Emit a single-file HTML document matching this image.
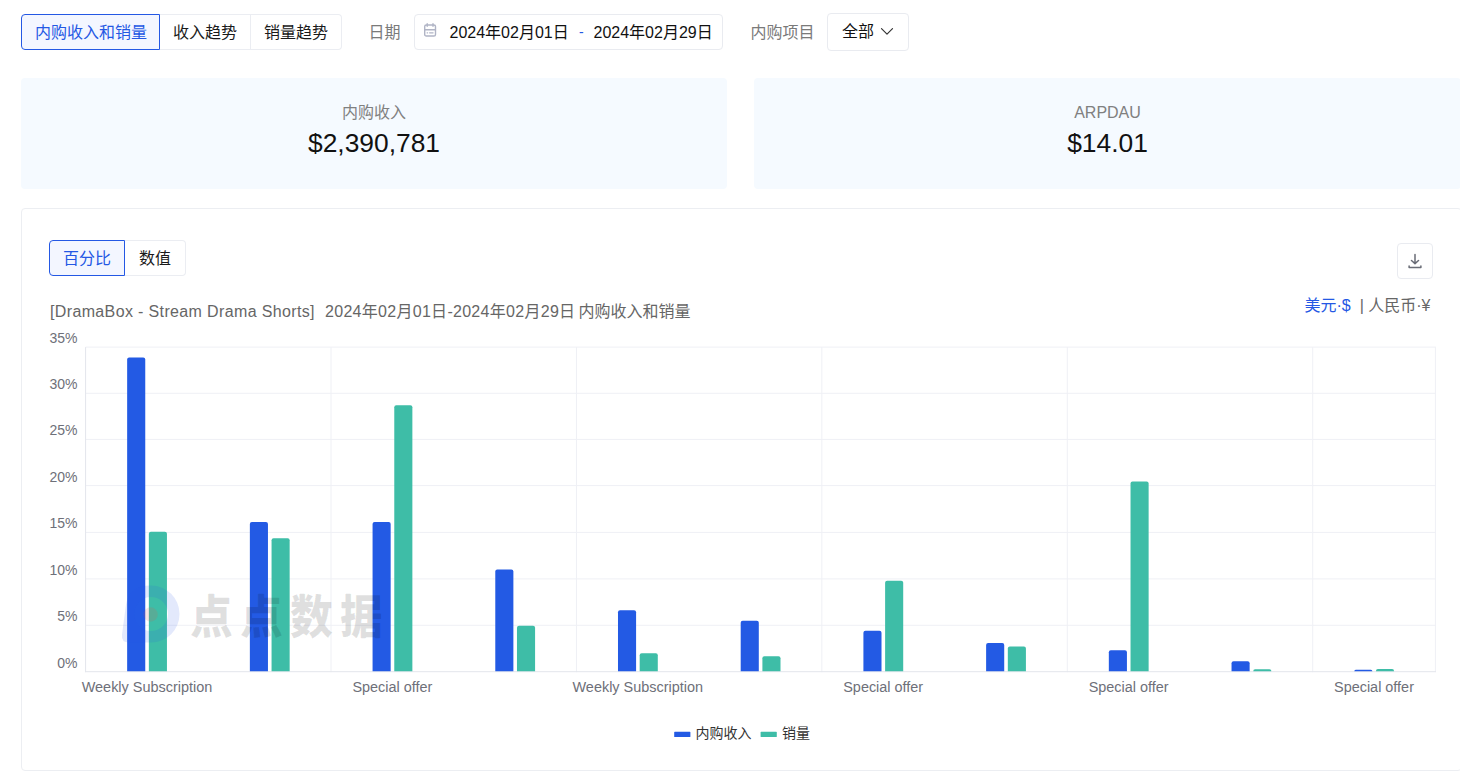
<!DOCTYPE html>
<html lang="zh-CN">
<head>
<meta charset="utf-8">
<title>内购收入和销量</title>
<style>
*{box-sizing:border-box;margin:0;padding:0}
html,body{width:1460px;height:776px;overflow:hidden;background:#fff}
body{position:relative;font-family:"Liberation Sans","Noto Sans CJK SC",sans-serif;font-size:16px;color:#111;line-height:1}
.abs{position:absolute;white-space:nowrap}
.tabs{position:absolute;display:flex;height:36px}
.tab{height:36px;line-height:35px;border:1px solid #ebedf2;border-left:none;padding:0 13px;font-size:16px;color:#1a1a1a;background:#fff;white-space:nowrap;text-align:center}
.tab:last-child{border-radius:0 4px 4px 0}
.tab.on{border:1px solid #2458e4;border-radius:4px 0 0 4px;background:#f3f6ff;color:#2458e4}
.lbl{position:absolute;font-size:16px;color:#7a7a7a;height:36px;line-height:36px;white-space:nowrap}
.box{position:absolute;border:1px solid #e9ebf0;border-radius:4px;background:#fff}
.stat{position:absolute;top:78px;height:111px;background:#f5faff;border-radius:4px;text-align:center}
.stat .k{position:absolute;left:0;right:0;top:25px;font-size:16px;line-height:20px;color:#808080}
.stat .v{position:absolute;left:0;right:0;top:48.7px;font-size:26.4px;line-height:32px;color:#111}
.card{position:absolute;left:21px;top:208px;width:1441px;height:563px;border:1px solid #eceef2;border-radius:4px;background:#fff}
</style>
</head>
<body>

<!-- top filter row -->
<div class="tabs" style="left:21px;top:14px">
  <div class="tab on" style="width:139px">内购收入和销量</div>
  <div class="tab" style="width:91px">收入趋势</div>
  <div class="tab" style="width:91px">销量趋势</div>
</div>

<div class="lbl" style="left:368.5px;top:15px">日期</div>
<div class="box" style="left:414px;top:14px;width:309px;height:36px">
  <svg class="abs" style="left:8.9px;top:8px" width="13" height="15" viewBox="0 0 13 15" fill="none" stroke="#b0b4c5" stroke-width="1.4" stroke-linecap="round">
    <rect x="0.7" y="2" width="10.8" height="11" rx="1.6"/>
    <path d="M3.2 0.7v2.6M9 0.7v2.6M0.9 6.8h10.4"/>
    <path d="M3.1 9.8h0.5M5.6 9.8h3.5" stroke-width="1.2"/>
  </svg>
  <div class="abs" style="left:34.5px;top:0.5px;height:34px;line-height:34px;font-size:16px;color:#111">2024年02月01日</div>
  <div class="abs" style="left:164px;top:0.5px;height:34px;line-height:33px;font-size:14px;color:#2458e4">-</div>
  <div class="abs" style="left:178.5px;top:0.5px;height:34px;line-height:34px;font-size:16px;color:#111">2024年02月29日</div>
</div>

<div class="lbl" style="left:750.5px;top:15px">内购项目</div>
<div class="box" style="left:827px;top:13px;width:82px;height:38px">
  <div class="abs" style="left:14px;top:0;height:36px;line-height:36px;font-size:16px;color:#111">全部</div>
  <svg class="abs" style="left:52px;top:13px" width="14" height="9" viewBox="0 0 14 9" fill="none" stroke="#333" stroke-width="1.2" stroke-linecap="round" stroke-linejoin="round"><path d="M1.5 1.7 L7 7.2 L12.5 1.7"/></svg>
</div>

<!-- stat cards -->
<div class="stat" style="left:21px;width:706px"><div class="k">内购收入</div><div class="v">$2,390,781</div></div>
<div class="stat" style="left:754px;width:707px"><div class="k">ARPDAU</div><div class="v">$14.01</div></div>

<!-- chart card -->
<div class="card"></div>

<div class="tabs" style="left:49px;top:240px">
  <div class="tab on" style="width:76px;line-height:36px">百分比</div>
  <div class="tab" style="width:61px;line-height:36px">数值</div>
</div>

<div class="box" style="left:1397px;top:243px;width:36px;height:36px">
  <svg class="abs" style="left:9px;top:9px" width="16" height="16" viewBox="0 0 16 16" fill="none" stroke="#696c76" stroke-width="1.5" stroke-linecap="round" stroke-linejoin="round">
    <path d="M8 1.4v8.8M4.5 7.5 8 10.6l3.5-3.1M2.1 13v1.4h11.8v-1.4"/>
  </svg>
</div>

<div class="abs" id="t1" style="left:50px;top:301px;height:22px;line-height:22px;font-size:16px;color:#666"><span id="t1a" style="letter-spacing:0.36px">[DramaBox - Stream Drama Shorts]</span></div>
<div class="abs" id="t2" style="left:325px;top:301px;height:22px;line-height:22px;font-size:16px;color:#666;letter-spacing:0.29px">2024年02月01日-2024年02月29日</div>
<div class="abs" id="t3" style="left:578.5px;top:301px;height:22px;line-height:22px;font-size:16px;color:#666">内购收入和销量</div>

<div class="abs" id="cur" style="right:29.5px;top:295px;height:22px;line-height:22px;font-size:16px;color:#666"><span style="color:#2458e4">美元·$</span>&nbsp; | 人民币·¥</div>

<svg id="chart" class="abs" style="left:0;top:0" width="1460" height="776" viewBox="0 0 1460 776" font-family="'Liberation Sans','Noto Sans CJK SC',sans-serif">
<line x1="85.6" y1="347.1" x2="1435.9" y2="347.1" stroke="#eff0f5" stroke-width="1"/>
<line x1="85.6" y1="393.3" x2="1435.9" y2="393.3" stroke="#eff0f5" stroke-width="1"/>
<line x1="85.6" y1="439.4" x2="1435.9" y2="439.4" stroke="#eff0f5" stroke-width="1"/>
<line x1="85.6" y1="485.6" x2="1435.9" y2="485.6" stroke="#eff0f5" stroke-width="1"/>
<line x1="85.6" y1="532.4" x2="1435.9" y2="532.4" stroke="#eff0f5" stroke-width="1"/>
<line x1="85.6" y1="578.9" x2="1435.9" y2="578.9" stroke="#eff0f5" stroke-width="1"/>
<line x1="85.6" y1="625.3" x2="1435.9" y2="625.3" stroke="#eff0f5" stroke-width="1"/>
<line x1="85.6" y1="347.1" x2="85.6" y2="672.2" stroke="#e3e5ec" stroke-width="1"/>
<line x1="331.02" y1="347.1" x2="331.02" y2="672.2" stroke="#eff0f5" stroke-width="1"/>
<line x1="576.44" y1="347.1" x2="576.44" y2="672.2" stroke="#eff0f5" stroke-width="1"/>
<line x1="821.85" y1="347.1" x2="821.85" y2="672.2" stroke="#eff0f5" stroke-width="1"/>
<line x1="1067.27" y1="347.1" x2="1067.27" y2="672.2" stroke="#eff0f5" stroke-width="1"/>
<line x1="1312.69" y1="347.1" x2="1312.69" y2="672.2" stroke="#eff0f5" stroke-width="1"/>
<line x1="1435.4" y1="347.1" x2="1435.4" y2="672.2" stroke="#eff0f5" stroke-width="1"/>
<line x1="85.1" y1="671.7" x2="1435.9" y2="671.7" stroke="#e3e5ec" stroke-width="1"/>
<text x="77.5" y="343.1" text-anchor="end" font-size="14" fill="#6e7079">35%</text>
<text x="77.5" y="389.3" text-anchor="end" font-size="14" fill="#6e7079">30%</text>
<text x="77.5" y="435.4" text-anchor="end" font-size="14" fill="#6e7079">25%</text>
<text x="77.5" y="481.6" text-anchor="end" font-size="14" fill="#6e7079">20%</text>
<text x="77.5" y="528.4" text-anchor="end" font-size="14" fill="#6e7079">15%</text>
<text x="77.5" y="574.9" text-anchor="end" font-size="14" fill="#6e7079">10%</text>
<text x="77.5" y="621.3" text-anchor="end" font-size="14" fill="#6e7079">5%</text>
<text x="77.5" y="667.7" text-anchor="end" font-size="14" fill="#6e7079">0%</text>
<path d="M127.15 671.2 V359.50 Q127.15 357.50 129.15 357.50 H143.25 Q145.25 357.50 145.25 359.50 V671.2 Z" fill="#235ae4"/>
<path d="M148.85 671.2 V533.75 Q148.85 531.75 150.85 531.75 H164.95 Q166.95 531.75 166.95 533.75 V671.2 Z" fill="#3ebda7"/>
<path d="M249.86 671.2 V524.00 Q249.86 522.00 251.86 522.00 H265.96 Q267.96 522.00 267.96 524.00 V671.2 Z" fill="#235ae4"/>
<path d="M271.56 671.2 V540.25 Q271.56 538.25 273.56 538.25 H287.66 Q289.66 538.25 289.66 540.25 V671.2 Z" fill="#3ebda7"/>
<path d="M372.57 671.2 V524.00 Q372.57 522.00 374.57 522.00 H388.67 Q390.67 522.00 390.67 524.00 V671.2 Z" fill="#235ae4"/>
<path d="M394.27 671.2 V407.25 Q394.27 405.25 396.27 405.25 H410.37 Q412.37 405.25 412.37 407.25 V671.2 Z" fill="#3ebda7"/>
<path d="M495.28 671.2 V571.50 Q495.28 569.50 497.28 569.50 H511.38 Q513.38 569.50 513.38 571.50 V671.2 Z" fill="#235ae4"/>
<path d="M516.98 671.2 V627.75 Q516.98 625.75 518.98 625.75 H533.08 Q535.08 625.75 535.08 627.75 V671.2 Z" fill="#3ebda7"/>
<path d="M617.99 671.2 V612.25 Q617.99 610.25 619.99 610.25 H634.09 Q636.09 610.25 636.09 612.25 V671.2 Z" fill="#235ae4"/>
<path d="M639.69 671.2 V655.25 Q639.69 653.25 641.69 653.25 H655.79 Q657.79 653.25 657.79 655.25 V671.2 Z" fill="#3ebda7"/>
<path d="M740.70 671.2 V622.75 Q740.70 620.75 742.70 620.75 H756.80 Q758.80 620.75 758.80 622.75 V671.2 Z" fill="#235ae4"/>
<path d="M762.40 671.2 V658.25 Q762.40 656.25 764.40 656.25 H778.50 Q780.50 656.25 780.50 658.25 V671.2 Z" fill="#3ebda7"/>
<path d="M863.41 671.2 V632.70 Q863.41 630.70 865.41 630.70 H879.51 Q881.51 630.70 881.51 632.70 V671.2 Z" fill="#235ae4"/>
<path d="M885.11 671.2 V582.70 Q885.11 580.70 887.11 580.70 H901.21 Q903.21 580.70 903.21 582.70 V671.2 Z" fill="#3ebda7"/>
<path d="M986.12 671.2 V645.10 Q986.12 643.10 988.12 643.10 H1002.22 Q1004.22 643.10 1004.22 645.10 V671.2 Z" fill="#235ae4"/>
<path d="M1007.82 671.2 V648.40 Q1007.82 646.40 1009.82 646.40 H1023.92 Q1025.92 646.40 1025.92 648.40 V671.2 Z" fill="#3ebda7"/>
<path d="M1108.83 671.2 V652.30 Q1108.83 650.30 1110.83 650.30 H1124.93 Q1126.93 650.30 1126.93 652.30 V671.2 Z" fill="#235ae4"/>
<path d="M1130.53 671.2 V483.40 Q1130.53 481.40 1132.53 481.40 H1146.63 Q1148.63 481.40 1148.63 483.40 V671.2 Z" fill="#3ebda7"/>
<path d="M1231.54 671.2 V663.30 Q1231.54 661.30 1233.54 661.30 H1247.64 Q1249.64 661.30 1249.64 663.30 V671.2 Z" fill="#235ae4"/>
<path d="M1253.24 671.2 V671.20 Q1253.24 669.30 1255.14 669.30 H1269.44 Q1271.34 669.30 1271.34 671.20 V671.2 Z" fill="#3ebda7"/>
<path d="M1354.25 671.2 V671.20 Q1354.25 669.70 1355.75 669.70 H1370.85 Q1372.35 669.70 1372.35 671.20 V671.2 Z" fill="#235ae4"/>
<path d="M1375.95 671.2 V671.00 Q1375.95 669.00 1377.95 669.00 H1392.05 Q1394.05 669.00 1394.05 671.00 V671.2 Z" fill="#3ebda7"/>
<text x="147.0" y="692.3" text-anchor="middle" font-size="14" fill="#6e7079" textLength="130.6" lengthAdjust="spacingAndGlyphs">Weekly Subscription</text>
<text x="392.4" y="692.3" text-anchor="middle" font-size="14" fill="#6e7079" textLength="79.9" lengthAdjust="spacingAndGlyphs">Special offer</text>
<text x="637.8" y="692.3" text-anchor="middle" font-size="14" fill="#6e7079" textLength="130.6" lengthAdjust="spacingAndGlyphs">Weekly Subscription</text>
<text x="883.2" y="692.3" text-anchor="middle" font-size="14" fill="#6e7079" textLength="79.9" lengthAdjust="spacingAndGlyphs">Special offer</text>
<text x="1128.6" y="692.3" text-anchor="middle" font-size="14" fill="#6e7079" textLength="79.9" lengthAdjust="spacingAndGlyphs">Special offer</text>
<text x="1374.0" y="692.3" text-anchor="middle" font-size="14" fill="#6e7079" textLength="79.9" lengthAdjust="spacingAndGlyphs">Special offer</text>
<rect x="674.2" y="731.8" width="16.2" height="5.2" rx="0.6" fill="#235ae4"/>
<text x="695.6" y="737.8" font-size="14" fill="#333">内购收入</text>
<rect x="760.6" y="731.8" width="16.2" height="5.2" rx="0.6" fill="#3ebda7"/>
<text x="782" y="737.8" font-size="14" fill="#333">销量</text>
<g id="wm"><path d="M151 585.5 a28.5 28.5 0 0 1 0 57 h-22 q-8 0 -7 -8 l4 -30 q3 -19 25 -19 z M151 597 a17 17 0 0 0 0 34 a17 17 0 0 0 0 -34 z" fill="#2458e4" fill-opacity="0.13" fill-rule="evenodd"/><circle cx="150.6" cy="614.5" r="7.2" fill="#f0503c" fill-opacity="0.15"/><text transform="translate(190,632.6) scale(0.93,1)" font-size="46" font-weight="900" letter-spacing="7.76" fill="#000" fill-opacity="0.12" font-family="'Noto Sans CJK SC',sans-serif">点点数据</text></g>
</svg>

</body>
</html>
